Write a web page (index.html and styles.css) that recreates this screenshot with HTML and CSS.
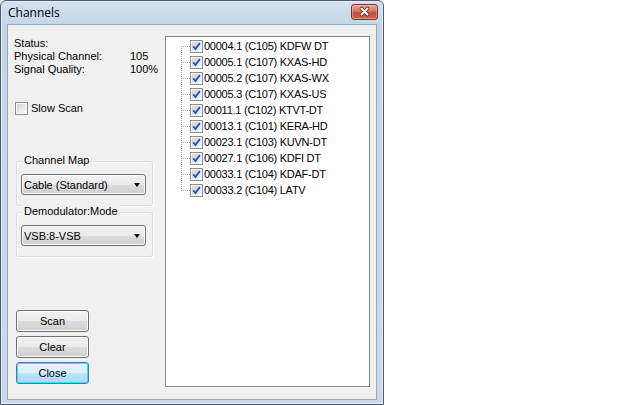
FILE: index.html
```html
<!DOCTYPE html>
<html>
<head>
<meta charset="utf-8">
<title>Channels</title>
<link rel="stylesheet" href="styles.css">
</head>
<body>
<div class="window">
  <div class="titlebar">
    <span class="title">Channels</span>
    <span class="close-x">
      <svg width="27" height="16" viewBox="0 0 27 16">
        <path d="M10.5 4.5 L16.5 10.5 M16.5 4.5 L10.5 10.5" stroke="#6a2519" stroke-width="3.6" stroke-linecap="round" fill="none"/>
        <path d="M10.5 4.5 L16.5 10.5 M16.5 4.5 L10.5 10.5" stroke="#ffffff" stroke-width="2" stroke-linecap="round" fill="none"/>
      </svg>
    </span>
  </div>
  <div class="client">
    <div class="left">
      <div class="status">
        <div class="row">Status:</div>
        <div class="row"><span class="label">Physical Channel:</span><span>105</span></div>
        <div class="row"><span class="label">Signal Quality:</span><span>100%</span></div>
      </div>
      <div class="check-row"><span class="cb"></span>Slow Scan</div>
      <div class="group g1">
        <div class="group-label">Channel Map</div>
        <div class="combo"><span>Cable (Standard)</span><span class="arrow"></span></div>
      </div>
      <div class="group g2">
        <div class="group-label">Demodulator:Mode</div>
        <div class="combo"><span>VSB:8-VSB</span><span class="arrow"></span></div>
      </div>
      <div class="buttons">
        <div class="btn">Scan</div>
        <div class="btn">Clear</div>
        <div class="btn default">Close</div>
      </div>
    </div>
    <div class="tree">
      <ul>
        <li class="first"><span class="cb checked"><svg width="11" height="11" viewBox="0 0 11 11"><path d="M2.2 5.4 L4.4 7.9 L8.9 2.2" stroke="#3457a8" stroke-width="2" fill="none"/></svg></span><span class="txt">00004.1 (C105) KDFW DT</span></li>
        <li><span class="cb checked"><svg width="11" height="11" viewBox="0 0 11 11"><path d="M2.2 5.4 L4.4 7.9 L8.9 2.2" stroke="#3457a8" stroke-width="2" fill="none"/></svg></span><span class="txt">00005.1 (C107) KXAS-HD</span></li>
        <li><span class="cb checked"><svg width="11" height="11" viewBox="0 0 11 11"><path d="M2.2 5.4 L4.4 7.9 L8.9 2.2" stroke="#3457a8" stroke-width="2" fill="none"/></svg></span><span class="txt">00005.2 (C107) KXAS-WX</span></li>
        <li><span class="cb checked"><svg width="11" height="11" viewBox="0 0 11 11"><path d="M2.2 5.4 L4.4 7.9 L8.9 2.2" stroke="#3457a8" stroke-width="2" fill="none"/></svg></span><span class="txt">00005.3 (C107) KXAS-US</span></li>
        <li><span class="cb checked"><svg width="11" height="11" viewBox="0 0 11 11"><path d="M2.2 5.4 L4.4 7.9 L8.9 2.2" stroke="#3457a8" stroke-width="2" fill="none"/></svg></span><span class="txt">00011.1 (C102) KTVT-DT</span></li>
        <li><span class="cb checked"><svg width="11" height="11" viewBox="0 0 11 11"><path d="M2.2 5.4 L4.4 7.9 L8.9 2.2" stroke="#3457a8" stroke-width="2" fill="none"/></svg></span><span class="txt">00013.1 (C101) KERA-HD</span></li>
        <li><span class="cb checked"><svg width="11" height="11" viewBox="0 0 11 11"><path d="M2.2 5.4 L4.4 7.9 L8.9 2.2" stroke="#3457a8" stroke-width="2" fill="none"/></svg></span><span class="txt">00023.1 (C103) KUVN-DT</span></li>
        <li><span class="cb checked"><svg width="11" height="11" viewBox="0 0 11 11"><path d="M2.2 5.4 L4.4 7.9 L8.9 2.2" stroke="#3457a8" stroke-width="2" fill="none"/></svg></span><span class="txt">00027.1 (C106) KDFI DT</span></li>
        <li><span class="cb checked"><svg width="11" height="11" viewBox="0 0 11 11"><path d="M2.2 5.4 L4.4 7.9 L8.9 2.2" stroke="#3457a8" stroke-width="2" fill="none"/></svg></span><span class="txt">00033.1 (C104) KDAF-DT</span></li>
        <li class="last"><span class="cb checked"><svg width="11" height="11" viewBox="0 0 11 11"><path d="M2.2 5.4 L4.4 7.9 L8.9 2.2" stroke="#3457a8" stroke-width="2" fill="none"/></svg></span><span class="txt">00033.2 (C104) LATV</span></li>
      </ul>
    </div>
  </div>
</div>
</body>
</html>
```

FILE: styles.css
```css
* { box-sizing: border-box; }
html, body { margin: 0; padding: 0; background: #ffffff; }
body {
  width: 640px;
  height: 405px;
  overflow: hidden;
  font-family: "Liberation Sans", Arial, sans-serif;
  font-size: 11px;
  color: #000;
}
.window {
  width: 384px;
  height: 405px;
  border: 1px solid #4d5b6c;
  border-radius: 6px 6px 0 0;
  background: linear-gradient(#d4e0ee 0, #c6d6e9 23px, #cbd9ea 100%);
  display: flex;
  flex-direction: column;
  padding-bottom: 4px;
  box-shadow: inset 0 0 0 1px #e6eef7;
}
.titlebar {
  height: 23px;
  flex: none;
  display: flex;
  justify-content: space-between;
  align-items: flex-start;
  padding: 0 5px 0 7px;
}
.title {
  font-family: "Segoe UI", "Open Sans", sans-serif;
  font-size: 12px;
  line-height: 24px;
  color: #000;
}
.close-x {
  display: block;
  width: 27px;
  height: 16px;
  margin-top: 3px;
  border: 1px solid #7b3326;
  border-radius: 3px;
  background: linear-gradient(#e7a595 0, #d4735f 45%, #c24b33 55%, #cf6a52 100%);
  box-shadow: inset 0 0 0 1px rgba(255,255,255,0.3);
  overflow: hidden;
}
.close-x svg { display: block; margin: -1px 0 0 -1px; }
.client {
  flex: 1;
  margin: 0 6px;
  border: 1px solid #93a6ba;
  background: #f0f0f0;
  display: flex;
}
.left {
  width: 157px;
  flex: none;
  display: flex;
  flex-direction: column;
  padding: 11px 0 15px 5px;
}
.status { padding: 1px 0 0 1px; }
.status .row {
  display: flex;
  height: 13px;
  line-height: 13px;
  white-space: nowrap;
}
.status .label { width: 116px; }
.check-row {
  display: flex;
  align-items: center;
  height: 13px;
  line-height: 13px;
  margin: 26px 0 0 2px;
}
.cb {
  display: block;
  flex: none;
  width: 13px;
  height: 13px;
  border: 1px solid #8e8f8f;
  background: linear-gradient(135deg, #cdd0d4 0%, #e9eaeb 55%, #fbfbfb 100%);
  box-shadow: inset 0 0 0 1px #f6f6f6;
  margin-right: 3px;
}
.cb svg { display: block; }
.cb.checked {
  background: linear-gradient(135deg, #c4cdd9 0%, #e3e8ef 55%, #f7f9fb 100%);
  margin-right: 1px;
}
.group {
  width: 137px;
  margin: 46px 0 0 3px;
  border: 1px solid #d5dfe5;
  border-radius: 3px;
  padding: 0 0 10px 4px;
  box-shadow: inset 1px 1px 0 #fdfdfd, 1px 1px 0 #fdfdfd;
}
.group.g2 { margin-top: 6px; }
.group-label {
  width: fit-content;
  margin: -8px 0 0 1px;
  padding: 0 1px 0 2px;
  line-height: 13px;
  height: 13px;
  background: #f0f0f0;
  white-space: nowrap;
}
.combo {
  margin-top: 7px;
  width: 125px;
  height: 21px;
  border: 1px solid #707070;
  border-radius: 3px;
  background: linear-gradient(#f2f2f2 0, #ebebeb 50%, #dddddd 50%, #cfcfcf 100%);
  box-shadow: inset 0 0 0 1px #fbfbfb;
  display: flex;
  align-items: center;
  justify-content: space-between;
  padding: 0 5px 0 2px;
  white-space: nowrap;
}
.arrow {
  width: 0;
  height: 0;
  border-left: 3.5px solid transparent;
  border-right: 3.5px solid transparent;
  border-top: 4px solid #000;
}
.buttons {
  margin: auto 0 0 3px;
  display: flex;
  flex-direction: column;
  gap: 4px;
}
.btn {
  width: 73px;
  height: 22px;
  border: 1px solid #707070;
  border-radius: 3px;
  background: linear-gradient(#f2f2f2 0, #ebebeb 50%, #dddddd 50%, #cfcfcf 100%);
  box-shadow: inset 0 0 0 1px #fcfcfc;
  text-align: center;
  line-height: 20px;
}
.btn.default {
  border-color: #3c7fb1;
  background: linear-gradient(#eaf6fd 0, #d9f0fc 50%, #bee6fd 50%, #a7d9f5 100%);
  box-shadow: inset 0 0 0 1px #48d5fd;
}
.tree {
  width: 205px;
  flex: none;
  margin: 11px 0 12px 0;
  border: 1px solid #828790;
  background: #fff;
}
.tree ul {
  list-style: none;
  margin: 0;
  padding: 1px 0 0 0;
}
.tree li {
  height: 16px;
  display: flex;
  align-items: center;
  padding-left: 24px;
  white-space: nowrap;
  background-image:
    repeating-linear-gradient(to bottom, #a0a0a0 0 1px, transparent 1px 2px),
    repeating-linear-gradient(to right, #a0a0a0 0 1px, transparent 1px 2px);
  background-repeat: no-repeat, no-repeat;
  background-size: 1px 16px, 9px 1px;
  background-position: 15px 0, 15px 8px;
}
.tree li.first {
  background-size: 1px 8px, 9px 1px;
  background-position: 15px 8px, 15px 8px;
}
.tree li.last {
  background-size: 1px 9px, 9px 1px;
  background-position: 15px 0, 15px 8px;
}
.tree .txt { letter-spacing: -0.25px; }
```
